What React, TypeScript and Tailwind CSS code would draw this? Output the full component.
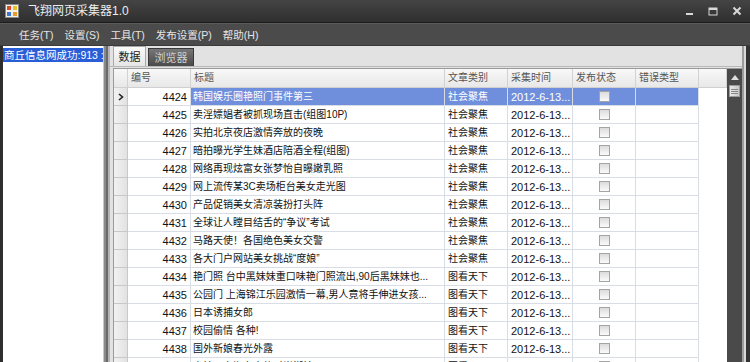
import React from "react";

type Row = { id: number; title: string; cat: string };

const rows: Row[] = [
  { id: 4424, title: "韩国娱乐圈艳照门事件第三", cat: "社会聚焦" },
  { id: 4425, title: "卖淫嫖娼者被抓现场直击(组图10P)", cat: "社会聚焦" },
  { id: 4426, title: "实拍北京夜店激情奔放的夜晚", cat: "社会聚焦" },
  { id: 4427, title: "暗拍曝光学生妹酒店陪酒全程(组图)", cat: "社会聚焦" },
  { id: 4428, title: "网络再现炫富女张梦怡自曝嫩乳照", cat: "社会聚焦" },
  { id: 4429, title: "网上流传某3C卖场柜台美女走光图", cat: "社会聚焦" },
  { id: 4430, title: "产品促销美女清凉装扮打头阵", cat: "社会聚焦" },
  { id: 4431, title: "全球让人瞠目结舌的“争议”考试", cat: "社会聚焦" },
  { id: 4432, title: "马路天使！各国绝色美女交警", cat: "社会聚焦" },
  { id: 4433, title: "各大门户网站美女挑战“度娘”", cat: "社会聚焦" },
  { id: 4434, title: "艳门照 台中黑妹妹重口味艳门照流出,90后黑妹妹也...", cat: "图看天下" },
  { id: 4435, title: "公园门 上海锦江乐园激情一幕,男人竟将手伸进女孩...", cat: "图看天下" },
  { id: 4436, title: "日本诱捕女郎", cat: "图看天下" },
  { id: 4437, title: "校园偷情 各种!", cat: "图看天下" },
  { id: 4438, title: "国外新娘春光外露", cat: "图看天下" },
  { id: 4439, title: "实拍：上海女人的时尚街拍", cat: "图看天下" },
];

const menus = ["任务(T)", "设置(S)", "工具(T)", "发布设置(P)", "帮助(H)"];

function AppIcon() {
  return (
    <svg width="14" height="14" viewBox="0 0 14 14">
      <rect x="0.5" y="0.5" width="13" height="13" fill="#f4f1e8" stroke="#8a8a8a" />
      <rect x="2" y="2" width="4" height="4" fill="#d94a2a" />
      <rect x="8" y="2" width="4" height="4" fill="#e8c22a" />
      <rect x="2" y="8" width="4" height="4" fill="#3a78d4" />
      <rect x="8" y="8" width="4" height="4" fill="#e89a2a" />
    </svg>
  );
}

function CheckBox() {
  return <div className="w-[11px] h-[11px] border border-[#a4a4a4] bg-gradient-to-b from-[#dcdcdc] to-[#fafafa]" />;
}

function Cell({ w, children, className = "" }: { w: string; children?: React.ReactNode; className?: string }) {
  return (
    <div className={`${w} shrink-0 h-full border-r border-[#d9dde5] flex items-center overflow-hidden whitespace-nowrap ${className}`}>
      {children}
    </div>
  );
}

function HeadCell({ w, children }: { w: string; children?: React.ReactNode }) {
  return (
    <div className={`${w} shrink-0 h-full border-r border-[#d2d2d2] flex items-center pl-[3px] text-[10px] text-[#555]`}>
      {children}
    </div>
  );
}

export default function App() {
  return (
    <div
      className="w-[750px] h-[362px] overflow-hidden bg-[#e4e4e4] text-[11px] leading-[14px]"
      style={{ fontFamily: '"Liberation Sans", "Noto Sans CJK SC", sans-serif' }}
    >
      {/* title bar */}
      <div className="h-[23px] bg-gradient-to-b from-[#444] to-[#2f2f2f] border-b border-[#1c1c1c] flex items-center pl-[5px]">
        <AppIcon />
        <span className="ml-[9px] text-[12px] text-[#ececec] leading-[16px]">飞翔网页采集器1.0</span>
        <div className="ml-auto flex items-center gap-[14px] pr-[8px] text-[#d8d8d8]">
          <svg width="9" height="9" viewBox="0 0 9 9"><rect x="1" y="6" width="7" height="2" fill="currentColor" /></svg>
          <svg width="10" height="9" viewBox="0 0 10 9"><rect x="1" y="1" width="8" height="7" fill="none" stroke="currentColor" /><rect x="1" y="1" width="8" height="2" fill="currentColor" /></svg>
          <svg width="10" height="10" viewBox="0 0 10 10"><path d="M1.5 1.5 L8.5 8.5 M8.5 1.5 L1.5 8.5" stroke="currentColor" strokeWidth="2" /></svg>
        </div>
      </div>

      {/* menu bar */}
      <div className="h-[23px] bg-[#4b4b4b] border-t border-[#5a5a5a] border-b border-b-[#3a3a3a] flex items-center pl-[19px] gap-[11px] text-[10.5px] text-[#e6e6e6]">
        {menus.map((m) => (
          <span key={m}>{m}</span>
        ))}
      </div>

      {/* body */}
      <div className="flex h-[316px]">
        <div className="w-[3px] bg-[#2e2e2e]" />
        <div className="w-[100px] bg-white pt-[2px]">
          <div className="h-[14px] bg-[#2a5ed6] text-white text-[10.5px] leading-[14px] whitespace-nowrap overflow-hidden pl-[1px]">
            商丘信息网成功:913 :
          </div>
        </div>
        {/* splitter */}
        <div className="w-[7px] flex">
          <div className="w-[1px] bg-[#c8c8c8]" />
          <div className="w-[2px] bg-[#8a8a8a]" />
          <div className="w-[2px] bg-[#6a6a6a]" />
          <div className="w-[2px] bg-[#b4b4b4]" />
        </div>

        <div className="flex-1 flex flex-col min-w-0 bg-[#e2e2e2]">
          {/* tabs */}
          <div className="h-[21px] flex items-end pl-[3px] gap-[2px] border-b border-[#b8b8b8]">
            <div className="h-[20px] w-[33px] bg-gradient-to-b from-[#fafafa] to-[#e6e6e6] border border-[#a8a8a8] border-b-0 flex items-center justify-center text-[11px] text-[#222]">
              数据
            </div>
            <div className="h-[18px] w-[46px] bg-gradient-to-b from-[#777] to-[#4a4a4a] border border-[#3a3a3a] border-b-0 flex items-center justify-center text-[11px] text-[#d0d0d0]">
              浏览器
            </div>
          </div>

          {/* grid */}
          <div className="flex-1 flex ml-[3px] mt-[1px] border-t border-l border-[#9a9a9a] bg-white min-h-0">
            <div className="flex-1 flex flex-col min-w-0">
              <div className="h-[19px] flex bg-gradient-to-b from-[#f8f8f8] to-[#e8e8e8] border-b border-[#d0d0d0] shrink-0">
                <div className="w-[14px] h-full border-r border-[#d2d2d2]" />
                <HeadCell w="w-[63px]">编号</HeadCell>
                <HeadCell w="w-[254px]">标题</HeadCell>
                <HeadCell w="w-[63px]">文章类别</HeadCell>
                <HeadCell w="w-[65px]">采集时间</HeadCell>
                <HeadCell w="w-[63px]">发布状态</HeadCell>
                <HeadCell w="w-[63px]">错误类型</HeadCell>
                <div className="flex-1 border-r border-[#d2d2d2]" />
              </div>
              {rows.map((r, i) => {
                const sel = i === 0;
                const hl = sel ? "bg-[#6f8fdd] text-white" : "text-[#111]";
                return (
                  <div key={r.id} className="h-[18px] flex shrink-0">
                    <div className="w-[14px] h-full shrink-0 bg-gradient-to-r from-[#f2f2f2] to-[#e2e2e2] border-r border-b border-[#c8c8c8] flex items-center justify-center">
                      {sel && (
                        <svg width="6" height="8" viewBox="0 0 6 8"><path d="M1 1 L4.5 4 L1 7" fill="none" stroke="#222" strokeWidth="1.6" /></svg>
                      )}
                    </div>
                    <div className="flex border-b border-[#d9dde5]">
                      <Cell w="w-[63px]" className="justify-end pr-[3px] text-[#111]">{r.id}</Cell>
                      <Cell w="w-[254px]" className={`pl-[2px] text-[10px] ${hl}`}>{r.title}</Cell>
                      <Cell w="w-[63px]" className={`pl-[3px] text-[10px] ${hl}`}>{r.cat}</Cell>
                      <Cell w="w-[65px]" className={`pl-[3px] ${hl}`}>2012-6-13...</Cell>
                      <Cell w="w-[63px]" className={`justify-center ${sel ? "bg-[#6f8fdd]" : ""}`}><CheckBox /></Cell>
                      <Cell w="w-[63px]" className={hl} />
                    </div>
                    <div className="flex-1" />
                  </div>
                );
              })}
            </div>
            {/* scrollbar */}
            <div className="w-[15px] bg-[#4a4a4a] flex flex-col items-center shrink-0">
              <div className="h-[15px] w-[13px] mt-[1px] flex items-center justify-center">
                <svg width="8" height="5" viewBox="0 0 8 5"><path d="M0 5 L4 0 L8 5 Z" fill="#e0e0e0" /></svg>
              </div>
              <div className="w-[11px] h-[12px] bg-gradient-to-r from-[#e8e8e8] to-[#c8c8c8] border border-[#999] flex flex-col items-center justify-center gap-[1px]">
                <div className="w-[7px] h-[1px] bg-[#888]" />
                <div className="w-[7px] h-[1px] bg-[#888]" />
                <div className="w-[7px] h-[1px] bg-[#888]" />
              </div>
            </div>
          </div>
        </div>

        {/* right frame */}
        <div className="w-[8px] flex">
          <div className="w-[2px] bg-[#9c9c9c]" />
          <div className="w-[2px] bg-[#d8d8d8]" />
          <div className="w-[4px] bg-[#333]" />
        </div>
      </div>
    </div>
  );
}
